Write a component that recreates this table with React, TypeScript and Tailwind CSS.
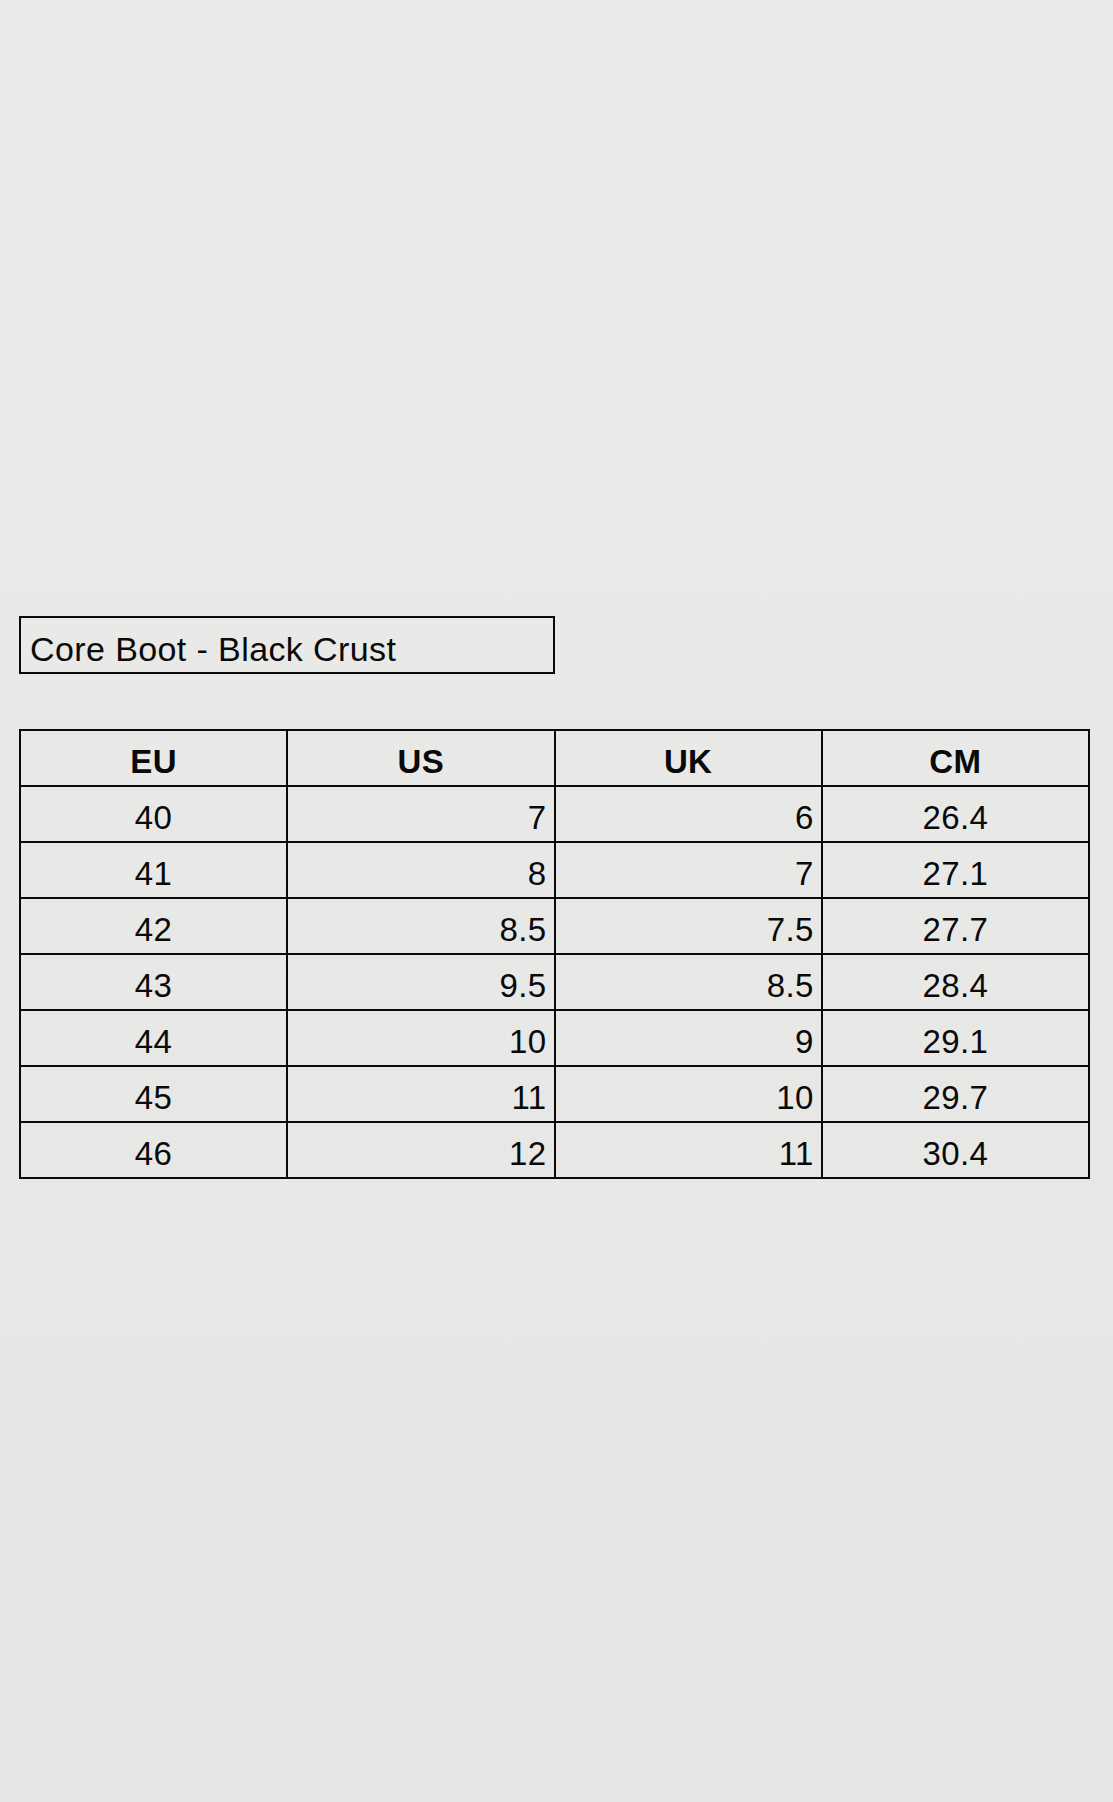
const rows = [
  { eu: '40', us: '7', uk: '6', cm: '26.4' },
  { eu: '41', us: '8', uk: '7', cm: '27.1' },
  { eu: '42', us: '8.5', uk: '7.5', cm: '27.7' },
  { eu: '43', us: '9.5', uk: '8.5', cm: '28.4' },
  { eu: '44', us: '10', uk: '9', cm: '29.1' },
  { eu: '45', us: '11', uk: '10', cm: '29.7' },
  { eu: '46', us: '12', uk: '11', cm: '30.4' },
];

export default function App() {
  return (
    <div
      className="min-h-[1802px] w-full bg-gradient-to-b from-[#ebebea] via-[#e8e8e7] to-[#e6e6e5] pt-[616px] pl-[19px] text-[#0a0a0a]"
      style={{ fontFamily: '"Liberation Sans", Arial, sans-serif' }}
    >
      {/* Product name */}
      <div className="flex h-[58px] w-[536px] items-center border-2 border-[#0a0a0a] pl-[9px] pt-[9px] text-[34px] tracking-[0.4px]">
        Core Boot - Black Crust
      </div>

      {/* Size chart */}
      <table className="mt-[55px] w-[1071px] table-fixed border-collapse border-2 border-[#0a0a0a] text-[33px] leading-none tracking-[0.4px]">
        <thead>
          <tr className="h-[56px]">
            {['EU', 'US', 'UK', 'CM'].map((h) => (
              <th key={h} className="border-2 border-[#0a0a0a] p-0 pt-[7px] text-center font-bold">
                {h}
              </th>
            ))}
          </tr>
        </thead>
        <tbody>
          {rows.map((r) => (
            <tr key={r.eu} className="h-[56px]">
              <td className="border-2 border-[#0a0a0a] p-0 pt-[7px] text-center">{r.eu}</td>
              <td className="border-2 border-[#0a0a0a] p-0 pt-[7px] pr-[7px] text-right">{r.us}</td>
              <td className="border-2 border-[#0a0a0a] p-0 pt-[7px] pr-[7px] text-right">{r.uk}</td>
              <td className="border-2 border-[#0a0a0a] p-0 pt-[7px] text-center">{r.cm}</td>
            </tr>
          ))}
        </tbody>
      </table>
    </div>
  );
}
